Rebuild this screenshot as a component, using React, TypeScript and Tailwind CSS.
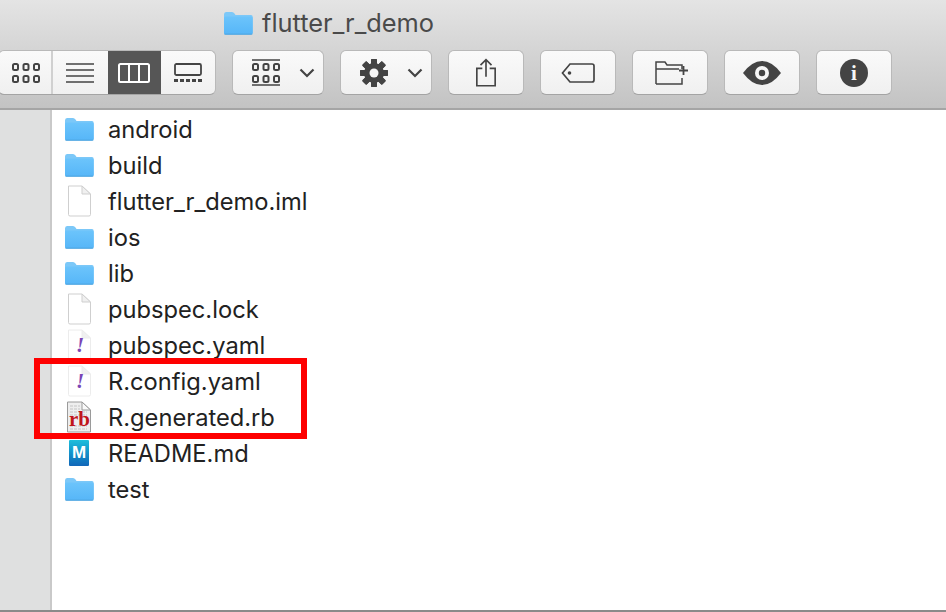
import React from "react";

const ink = "#444";

function Folder({ w = 30, h = 24 }: { w?: number; h?: number }) {
  const id = `g${w}`;
  return (
    <svg width={w} height={h} viewBox="0 0 30 24" className="block">
      <defs>
        <linearGradient id={id} x1="0" y1="0" x2="0" y2="1">
          <stop offset="0" stopColor="#6cc4fb" />
          <stop offset="1" stopColor="#56b6f8" />
        </linearGradient>
      </defs>
      <path d="M1 3.5 Q1 1 3 1 H9 Q10.5 1 11.5 2.5 L12.5 4 H28 Q29.7 4 29.7 6 V21.5 Q29.7 23.4 28 23.4 H2.6 Q1 23.4 1 21.5 Z" fill="#7cc8f8" />
      <path d="M1 7 Q1 5.6 2.6 5.6 H28 Q29.7 5.6 29.7 7 V21.5 Q29.7 23.4 28 23.4 H2.6 Q1 23.4 1 21.5 Z" fill={`url(#${id})`} />
      <path d="M1.4 23.2 H29.3" stroke="#4b9fd8" strokeWidth="0.8" />
    </svg>
  );
}

function Doc({ faint = false }: { faint?: boolean }) {
  return (
    <svg width="30" height="32" viewBox="0 0 30 32" className="block">
      <path d="M4.5 1 H18 L26.5 9 V29.5 Q26.5 31 25 31 H6 Q4.5 31 4.5 29.5 Z" fill="#fff" stroke={faint ? "#ececec" : "#cfcfcf"} strokeWidth="1" />
      <path d="M18 1 V9 H26.5 Z" fill="#f0f0f0" stroke={faint ? "#ececec" : "#cfcfcf"} strokeWidth="1" strokeLinejoin="round" />
    </svg>
  );
}

function Yaml() {
  return (
    <div className="relative h-[32px] w-[30px]">
      <Doc faint />
      <span className="absolute left-[12px] top-[6px] font-['Liberation_Serif',serif] text-[21px] font-bold italic leading-[20px] text-[#7a45b5]">!</span>
    </div>
  );
}

function Rb() {
  return (
    <div className="relative h-[32px] w-[30px]">
      <svg width="30" height="32" viewBox="0 0 30 32" className="block">
        <path d="M3.5 1 H18 L26.5 9 V31 H3.5 Z" fill="#eeeeee" stroke="#9a9a9a" strokeWidth="1" />
        <path d="M18 1 V9 H26.5 Z" fill="#fafafa" stroke="#9a9a9a" strokeWidth="1" />
        <path d="M6 5H16M6 8H16M6 11H23M6 14H23M6 25H23M6 28H23" stroke="#c4c4c4" strokeWidth="1.2" strokeDasharray="3 1" />
      </svg>
      <span className="absolute left-[5px] top-[8px] font-['Liberation_Serif',serif] text-[21px] font-bold leading-[20px] text-[#c0151b]">rb</span>
    </div>
  );
}

function Md() {
  return (
    <div className="flex h-[32px] w-[30px] items-center justify-center">
      <div className="flex h-[26px] w-[20px] items-center justify-center rounded-[1px] bg-gradient-to-b from-[#1fbedb] to-[#1266b8] pb-[2px] font-['Liberation_Sans',sans-serif] text-[17px] font-bold leading-none text-white">
        M
      </div>
    </div>
  );
}

const rows: { name: string; icon: React.ReactNode }[] = [
  { name: "android", icon: <Folder /> },
  { name: "build", icon: <Folder /> },
  { name: "flutter_r_demo.iml", icon: <Doc /> },
  { name: "ios", icon: <Folder /> },
  { name: "lib", icon: <Folder /> },
  { name: "pubspec.lock", icon: <Doc /> },
  { name: "pubspec.yaml", icon: <Yaml /> },
  { name: "R.config.yaml", icon: <Yaml /> },
  { name: "R.generated.rb", icon: <Rb /> },
  { name: "README.md", icon: <Md /> },
  { name: "test", icon: <Folder /> },
];

const btn =
  "flex h-[45px] items-center justify-center rounded-[6px] border border-[#b9b9b9] border-b-[#a4a4a4] bg-gradient-to-b from-[#fafafa] to-[#f0f0f0]";

function Dots3x2({ y = 0 }: { y?: number }) {
  const c: React.ReactNode[] = [];
  [0, 1].forEach((r) =>
    [0, 1, 2].forEach((i) =>
      c.push(<rect key={`${r}${i}`} x={i * 10.5 + 1} y={y + r * 12 + 1} width="5" height="6" rx="1.5" fill="none" stroke={ink} strokeWidth="2" />)
    )
  );
  return <>{c}</>;
}

function Chevron() {
  return (
    <svg width="16" height="10" viewBox="0 0 16 10">
      <path d="M1.5 1.5 L8 8 L14.5 1.5" fill="none" stroke={ink} strokeWidth="2.2" />
    </svg>
  );
}

function Gear() {
  const teeth = [0, 45, 90, 135, 180, 225, 270, 315];
  return (
    <svg width="28" height="28" viewBox="0 0 28 28">
      {teeth.map((a) => (
        <rect key={a} x="11" y="0" width="6" height="28" rx="1" fill={ink} transform={`rotate(${a} 14 14)`} />
      ))}
      <circle cx="14" cy="14" r="10" fill={ink} />
      <circle cx="14" cy="14" r="4.5" fill="#f6f6f6" />
    </svg>
  );
}

export default function App() {
  return (
    <div className="flex h-[612px] w-[946px] flex-col overflow-hidden bg-white font-['Inter','Liberation_Sans',sans-serif]">
      {/* Toolbar */}
      <header className="flex h-[110px] flex-col border-b-2 border-[#a5a5a5] bg-gradient-to-b from-[#e4e4e4] to-[#c3c3c3]">
        <div className="flex h-[50px] items-center gap-[9px] pb-[5px] pl-[223px]">
          <Folder w={30} h={24} />
          <span className="text-[25.4px] leading-[30px] text-[#4a4a4a]">flutter_r_demo</span>
        </div>
        <div className="flex items-start gap-[16px]">
          <div className={`${btn} -ml-[2px] w-[218px] overflow-hidden !justify-start`}>
            <div className="flex h-full w-[54px] items-center justify-center border-r-2 border-[#d0d0d0] pl-[2px]">
              <svg width="28" height="20" viewBox="0 0 28 20"><Dots3x2 /></svg>
            </div>
            <div className="flex h-full w-[55px] items-center justify-center">
              <svg width="28" height="20" viewBox="0 0 28 20">
                <path d="M0 1H28M0 7H28M0 13H28M0 19H28" stroke={ink} strokeWidth="1.6" />
              </svg>
            </div>
            <div className="flex h-full w-[54px] items-center justify-center bg-[#565656]">
              <svg width="32" height="20" viewBox="0 0 32 20">
                <rect x="1" y="1" width="30" height="18" rx="1.5" fill="none" stroke="#fff" strokeWidth="2" />
                <path d="M11 1V19M21 1V19" stroke="#fff" strokeWidth="2" />
              </svg>
            </div>
            <div className="flex h-full w-[54px] items-center justify-center">
              <svg width="28" height="20" viewBox="0 0 28 20">
                <rect x="1" y="1" width="26" height="11" rx="1.5" fill="none" stroke={ink} strokeWidth="1.8" />
                <path d="M0 17.5H28" stroke={ink} strokeWidth="3" strokeDasharray="4 2" />
              </svg>
            </div>
          </div>
          <div className={`${btn} w-[92px] !justify-start gap-[19px] pl-[19px]`}>
            <svg width="28" height="27" viewBox="0 0 28 27">
              <path d="M0 1H28M0 26H28" stroke={ink} strokeWidth="1.6" />
              <Dots3x2 y={4} />
            </svg>
            <Chevron />
          </div>
          <div className={`${btn} w-[92px] !justify-start gap-[19px] pl-[19px]`}>
            <Gear />
            <Chevron />
          </div>
          <div className={`${btn} w-[76px]`}>
            <svg width="22" height="31" viewBox="0 0 24 31">
              <path d="M8 11H2V30H22V11H16M12 20V1.5M6 7.5L12 1.5L18 7.5" fill="none" stroke={ink} strokeWidth="1.8" />
            </svg>
          </div>
          <div className={`${btn} w-[76px]`}>
            <svg width="34" height="20" viewBox="0 0 34 20">
              <path d="M9 1H31Q33 1 33 3V17Q33 19 31 19H9L1.5 10Z" fill="none" stroke={ink} strokeWidth="1.7" />
              <circle cx="8.5" cy="10" r="1.8" fill={ink} />
            </svg>
          </div>
          <div className={`${btn} w-[76px] pl-[4px]`}>
            <svg width="34" height="24" viewBox="0 0 34 24">
              <path d="M1 23V1H10L12 4H27V8M1 8H24M27 17V23H1" fill="none" stroke={ink} strokeWidth="1.5" />
              <path d="M24 9.5H33M28.5 5V14" stroke={ink} strokeWidth="1.8" />
            </svg>
          </div>
          <div className={`${btn} w-[76px]`}>
            <svg width="38" height="24" viewBox="0 0 38 24">
              <path d="M0 12Q9 0 19 0T38 12Q29 24 19 24T0 12Z" fill={ink} />
              <circle cx="19" cy="12" r="7" fill="#f6f6f6" />
              <circle cx="19" cy="12" r="3.2" fill={ink} />
            </svg>
          </div>
          <div className={`${btn} w-[76px]`}>
            <div className="relative h-[28px] w-[28px] rounded-full bg-[#444]">
              <span className="absolute inset-0 text-center font-['Liberation_Serif',serif] text-[21px] font-bold leading-[28px] text-[#f6f6f6]">i</span>
            </div>
          </div>
        </div>
      </header>

      {/* Body */}
      <main className="flex min-h-0 flex-1 border-b-2 border-[#8a8a8a]">
        <aside className="w-[52px] shrink-0 border-r-2 border-[#c9c9c9] bg-[#dfe0e0]" />
        <section className="relative flex-1">
          <ul className="pl-[12px] pt-[1px]">
            {rows.map((r) => (
              <li key={r.name} className="flex h-[36px] items-center gap-[14px]">
                <span className="flex h-[32px] w-[30px] items-center justify-center">{r.icon}</span>
                <span className="pt-[2px] text-[23.7px] leading-[36px] text-[#222]">{r.name}</span>
              </li>
            ))}
          </ul>
          <div className="absolute left-[-18px] top-[248px] h-[81px] w-[273px] border-[6px] border-[#fe0000]" />
        </section>
      </main>
    </div>
  );
}
